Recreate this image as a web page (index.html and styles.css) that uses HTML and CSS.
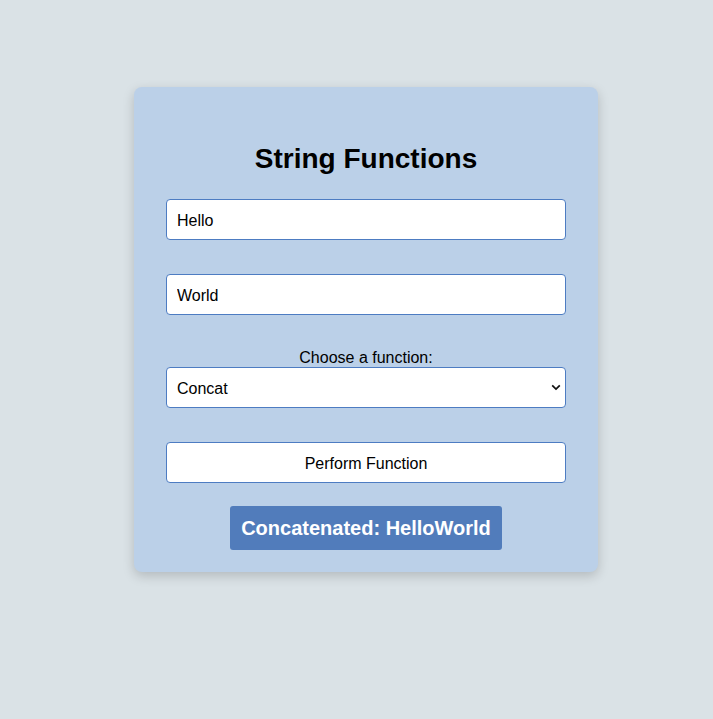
FILE: index.html
```html
<!DOCTYPE html>
<html>
<head>
<meta charset="utf-8">
<link rel="stylesheet" href="styles.css">
</head>
<body>
<div class="page">
  <div class="card">
    <h2 class="title">String Functions</h2>
    <input class="field" type="text" value="Hello">
    <input class="field" type="text" value="World">
    <div class="group">
      <label class="label" for="fn">Choose a function:</label>
      <div class="select-wrap">
        <select class="field select" id="fn">
          <option>Concat</option>
        </select>
        <svg class="chevron" width="10" height="7" viewBox="0 0 10 7" aria-hidden="true">
          <path d="M1.2 1.3 L5 5.1 L8.8 1.3" fill="none" stroke="#111" stroke-width="1.7"/>
        </svg>
      </div>
    </div>
    <button class="field button">Perform Function</button>
    <div class="result">Concatenated: HelloWorld</div>
  </div>
</div>
</body>
</html>
```

FILE: styles.css
```css
html, body {
  margin: 0;
  padding: 0;
  background: #dae2e6;
  font-family: "Liberation Sans", Arial, sans-serif;
}
.page {
  display: flex;
  justify-content: center;
  padding: 87px 0 40px 19px;
}
.card {
  width: 400px;
  background: #bbd0e8;
  border-radius: 8px;
  box-shadow: 0 4px 12px rgba(0, 0, 0, 0.18);
  padding: 32px 32px 22px;
  display: flex;
  flex-direction: column;
  align-items: center;
}
.title {
  margin: 24px 0 24px;
  font-size: 28px;
  font-weight: bold;
  color: #000;
  line-height: 32px;
  text-align: center;
}
.field {
  box-sizing: border-box;
  width: 400px;
  height: 41px;
  margin: 0 0 34px;
  padding: 2px 10px 0;
  border: 1px solid #4d7cc2;
  border-radius: 4px;
  background: #fff;
  font-family: "Liberation Sans", Arial, sans-serif;
  font-size: 16px;
  color: #000;
  outline: none;
}
.group {
  display: flex;
  flex-direction: column;
  align-items: center;
  width: 400px;
}
.label {
  font-size: 16px;
  line-height: 18px;
  color: #000;
}
.select-wrap {
  position: relative;
  width: 400px;
}
.select {
  display: block;
  -webkit-appearance: none;
  appearance: none;
}
.chevron {
  position: absolute;
  right: 5px;
  top: 17px;
  pointer-events: none;
}
.button {
  margin-bottom: 23px;
  text-align: center;
}
.result {
  background: #517cbb;
  color: #fff;
  font-weight: bold;
  font-size: 20px;
  line-height: 24px;
  padding: 10px 11px;
  border-radius: 3px;
}
```
